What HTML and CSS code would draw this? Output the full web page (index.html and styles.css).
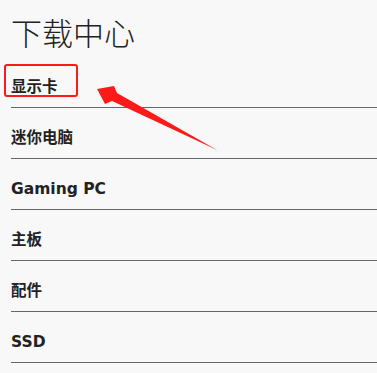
FILE: index.html
```html
<!DOCTYPE html>
<html lang="zh-CN">
<head>
    <meta charset="UTF-8">
    <meta name="viewport" content="width=device-width, initial-scale=1.0">
    <title>下载中心</title>
    <link rel="stylesheet" href="styles.css">
</head>
<body>
    <div class="page">
        <h1 class="title">下载中心</h1>
        <ul class="menu">
            <li class="menu-item">显示卡</li>
            <li class="menu-item">迷你电脑</li>
            <li class="menu-item">Gaming PC</li>
            <li class="menu-item">主板</li>
            <li class="menu-item">配件</li>
            <li class="menu-item">SSD</li>
        </ul>

        <!-- annotation -->
        <div class="mark-box"></div>
        <svg class="mark-arrow" width="377" height="373" viewBox="0 0 377 373">
            <polygon points="97,89 114,86 117,93 217,150 112,101 105,104" fill="#ff1a1a"/>
        </svg>
    </div>
</body>
</html>
```

FILE: styles.css
```css
* {
    box-sizing: border-box;
    margin: 0;
    padding: 0;
}

body {
    background: #f8f8f8;
    color: #222;
    font-family: "DejaVu Sans", "Noto Sans CJK SC", sans-serif;
}

.page {
    position: relative;
    width: 377px;
    height: 373px;
    overflow: hidden;
    padding-left: 11px;
}

.title {
    font-family: "Noto Sans CJK SC", sans-serif;
    font-weight: 300;
    font-size: 31px;
    line-height: 40px;
    height: 57px;
    padding-top: 12px;
}

.menu {
    list-style: none;
}

.menu-item {
    height: 51px;
    border-bottom: 1px solid #666;
    font-size: 15.5px;
    font-weight: 700;
    line-height: 20px;
    padding-top: 20px;
}

.mark-box {
    position: absolute;
    left: 4px;
    top: 64px;
    width: 74px;
    height: 33px;
    border: 2px solid #ff1a1a;
    border-radius: 3px;
}

.mark-arrow {
    position: absolute;
    left: 0;
    top: 0;
}
```
